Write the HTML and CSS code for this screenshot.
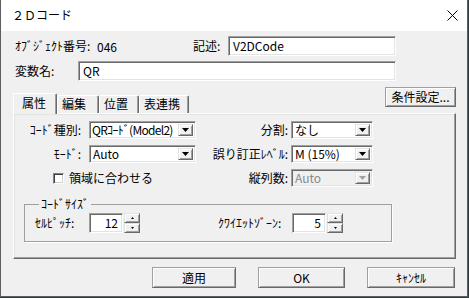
FILE: index.html
```html
<!DOCTYPE html>
<html lang="ja">
<head>
<meta charset="utf-8">
<link rel="stylesheet" href="styles.css">
</head>
<body>
<div class="window">
  <div class="titlebar">
    <span class="title">２Ｄコード</span>
    <svg class="close" width="11" height="11" viewBox="0 0 11 11"><path d="M0.5 0.5 L10.5 10.5 M10.5 0.5 L0.5 10.5" stroke="#000" stroke-width="1" fill="none"/></svg>
  </div>
  <div class="client">
    <div class="row">
      <span class="lbl l-obj">ｵﾌﾞｼﾞｪｸﾄ番号:</span>
      <span class="objno">046</span>
      <span class="lbl l-desc">記述:</span>
      <div class="field f-desc">V2DCode</div>
    </div>
    <div class="row row2">
      <span class="lbl l-var">変数名:</span>
      <div class="field f-var">QR</div>
    </div>
    <div class="tabrow">
      <div class="tabs">
        <div class="tab sel t1">属性</div>
        <div class="tab t2">編集</div>
        <div class="tab t3">位置</div>
        <div class="tab t4">表連携</div>
      </div>
      <div class="btn cond">条件設定...</div>
    </div>
    <div class="panel">
      <div class="grid">
        <span class="glbl">ｺｰﾄﾞ種別:</span>
        <div class="combo"><span class="cval tight">QRｺｰﾄﾞ(Model2)</span><span class="arrow"><svg width="7" height="4" viewBox="0 0 7 4"><polygon points="0,0 7,0 3.5,4" fill="#000"/></svg></span></div>
        <span class="glbl r">分割:</span>
        <div class="combo"><span class="cval">なし</span><span class="arrow"><svg width="7" height="4" viewBox="0 0 7 4"><polygon points="0,0 7,0 3.5,4" fill="#000"/></svg></span></div>

        <span class="glbl">ﾓｰﾄﾞ:</span>
        <div class="combo"><span class="cval">Auto</span><span class="arrow"><svg width="7" height="4" viewBox="0 0 7 4"><polygon points="0,0 7,0 3.5,4" fill="#000"/></svg></span></div>
        <span class="glbl r">誤り訂正ﾚﾍﾞﾙ:</span>
        <div class="combo"><span class="cval">M (15%)</span><span class="arrow"><svg width="7" height="4" viewBox="0 0 7 4"><polygon points="0,0 7,0 3.5,4" fill="#000"/></svg></span></div>

        <label class="check"><span class="box"></span><span>領域に合わせる</span></label>
        <span class="glbl r">縦列数:</span>
        <div class="combo disabled"><span class="cval">Auto</span><span class="arrow"><svg width="7" height="4" viewBox="0 0 7 4"><polygon points="0,0 7,0 3.5,4" fill="#a0a0a0"/></svg></span></div>
      </div>
      <fieldset class="group">
        <legend>ｺｰﾄﾞｻｲｽﾞ</legend>
        <div class="grow">
          <span class="lbl l-pitch">ｾﾙﾋﾟｯﾁ:</span>
          <div class="field num">12</div>
          <div class="spin"><span class="sb"><svg width="3" height="2" viewBox="0 0 3 2"><polygon points="1.5,0 3,2 0,2" fill="#000"/></svg></span><span class="sb"><svg width="3" height="2" viewBox="0 0 3 2"><polygon points="0,0 3,0 1.5,2" fill="#000"/></svg></span></div>
          <span class="lbl l-quiet">ｸﾜｲｴｯﾄｿﾞｰﾝ:</span>
          <div class="field num">5</div>
          <div class="spin"><span class="sb"><svg width="3" height="2" viewBox="0 0 3 2"><polygon points="1.5,0 3,2 0,2" fill="#000"/></svg></span><span class="sb"><svg width="3" height="2" viewBox="0 0 3 2"><polygon points="0,0 3,0 1.5,2" fill="#000"/></svg></span></div>
        </div>
      </fieldset>
    </div>
    <div class="buttons">
      <div class="btn b-apply">適用</div>
      <div class="btn b-ok">OK</div>
      <div class="btn b-cancel">ｷｬﾝｾﾙ</div>
    </div>
  </div>
</div>
</body>
</html>
```

FILE: styles.css
```css
* { box-sizing: border-box; }
body {
  margin: 0;
  width: 469px;
  height: 298px;
  overflow: hidden;
  background: #2e3b3e;
  font-family: "Noto Sans CJK JP", "Noto Sans", sans-serif;
  font-size: 12px;
  color: #000;
}
.window {
  width: 468px;
  height: 297px;
  background: #f0f0f0;
  border: 1px solid #5e5e5e;
  border-top: none;
  display: flex;
  flex-direction: column;
}
.titlebar {
  height: 31px;
  flex: none;
  background: #fff;
  display: flex;
  align-items: center;
  padding: 0 9px 1px 11px;
}
.title { flex: 1; line-height: 14px; font-size: 12px; }
.close { display: block; }
.client {
  padding: 5px 11px 0 12px;
}
.row {
  display: flex;
  align-items: center;
  height: 20px;
  padding-left: 2px;
}
.row2 { margin-top: 5px; }
.lbl { white-space: nowrap; line-height: 14px; }
.l-obj { width: 82px; }
.objno { width: 96px; }
.l-desc { width: 35px; }
.l-var { width: 63px; }
.field {
  height: 20px;
  background: #fff;
  border: 1px solid;
  border-color: #a0a0a0 #fff #fff #a0a0a0;
  box-shadow: inset 1px 1px #696969, inset -1px -1px #e3e3e3;
  padding-left: 4px;
  line-height: 18px;
  white-space: nowrap;
}
.f-desc { width: 168px; }
.f-var { width: 318px; }

.tabrow {
  margin-top: 6px;
  height: 26px;
  display: flex;
  align-items: flex-end;
}
.tabs {
  display: flex;
  align-items: flex-end;
  margin-bottom: -1px;
  position: relative;
  z-index: 1;
}
.tab {
  height: 18px;
  margin-bottom: 1px;
  border-top: 1px solid #fff;
  border-left: 1px solid #fff;
  border-right: 1px solid #696969;
  box-shadow: inset -1px 0 #a0a0a0;
  border-radius: 2px 2px 0 0;
  line-height: 16px;
  padding-left: 4px;
  white-space: nowrap;
  background: #f0f0f0;
}
.tab.sel {
  height: 21px;
  margin-bottom: 0;
  padding-left: 8px;
  line-height: 17px;
}
.t1 { width: 44px; }
.t2 { width: 42px; }
.t3 { width: 40px; }
.t4 { width: 50px; }
.btn {
  background: #f0f0f0;
  border: 1px solid;
  border-color: #a0a0a0 #696969 #696969 #a0a0a0;
  box-shadow: inset 1px 1px #fff, inset -1px -1px #a0a0a0;
  display: flex;
  align-items: center;
  justify-content: center;
  white-space: nowrap;
  line-height: 14px;
}
.cond {
  align-self: flex-start;
  margin-left: auto;
  width: 71px;
  height: 20px;
}

.panel {
  border: 1px solid;
  border-color: #fff #696969 #696969 #fff;
  box-shadow: inset -1px -1px #a0a0a0, inset 1px 1px #e3e3e3;
  padding: 7px 0 16px 0;
}
.grid {
  display: grid;
  grid-template-columns: 75px 107px 95px 82px;
  grid-auto-rows: 18px;
  row-gap: 6px;
  align-items: center;
}
.glbl {
  text-align: right;
  padding-right: 8px;
  white-space: nowrap;
  line-height: 14px;
}
.glbl.r { padding-right: 3px; }
.combo {
  height: 18px;
  background: #fff;
  border: 1px solid;
  border-color: #a0a0a0 #fff #fff #a0a0a0;
  box-shadow: inset 1px 1px #696969, inset -1px -1px #e3e3e3;
  display: flex;
  align-items: stretch;
  padding: 2px;
}
.cval {
  flex: 1;
  display: flex;
  align-items: center;
  line-height: 12px;
  padding-left: 1px;
  white-space: nowrap;
  min-width: 0;
}
.cval.tight { letter-spacing: -0.7px; padding-left: 0; }
.arrow {
  width: 15px;
  flex: none;
  background: #f0f0f0;
  border: 1px solid;
  border-color: #e3e3e3 #696969 #696969 #e3e3e3;
  box-shadow: inset 1px 1px #fff, inset -1px -1px #a0a0a0;
  display: flex;
  align-items: center;
  justify-content: center;
}
.arrow svg { display: block; }
.combo.disabled { background: #f0f0f0; color: #8a8a8a; }
.check {
  grid-column: 1 / 3;
  display: flex;
  align-items: center;
  padding-left: 39px;
  gap: 5px;
  line-height: 14px;
}
.box {
  width: 11px;
  height: 11px;
  background: #fff;
  border: 1px solid;
  border-color: #808080 #fff #fff #808080;
  box-shadow: inset 1px 1px #404040, inset -1px -1px #d4d0c8;
}

.group {
  margin: 10px 0 0 10px;
  width: 368px;
  border: 1px solid #a0a0a0;
  box-shadow: 1px 1px #fff;
  padding: 2px 0 8px 10px;
  min-width: 0;
}
.group legend {
  margin-left: 4px;
  padding: 0 2px;
  line-height: 14px;
  white-space: nowrap;
}
.grow {
  display: flex;
  align-items: center;
  height: 20px;
}
.l-pitch { width: 54px; }
.l-quiet { width: 74px; margin-left: 78px; }
.num {
  width: 34px;
  text-align: right;
  padding: 0 4px 0 0;
}
.spin {
  margin-left: 1px;
  width: 16px;
  height: 20px;
  display: flex;
  flex-direction: column;
}
.sb {
  flex: 1;
  background: #f0f0f0;
  border: 1px solid;
  border-color: #e3e3e3 #696969 #696969 #e3e3e3;
  box-shadow: inset 1px 1px #fff, inset -1px -1px #a0a0a0;
  display: flex;
  align-items: center;
  justify-content: center;
}
.sb svg { display: block; }

.buttons {
  margin-top: 8px;
  display: flex;
  justify-content: flex-end;
  gap: 22px;
  padding-right: 1px;
}
.buttons .btn { height: 21px; }
.b-apply { width: 84px; }
.b-ok { width: 87px; }
.b-cancel { width: 88px; }
```
